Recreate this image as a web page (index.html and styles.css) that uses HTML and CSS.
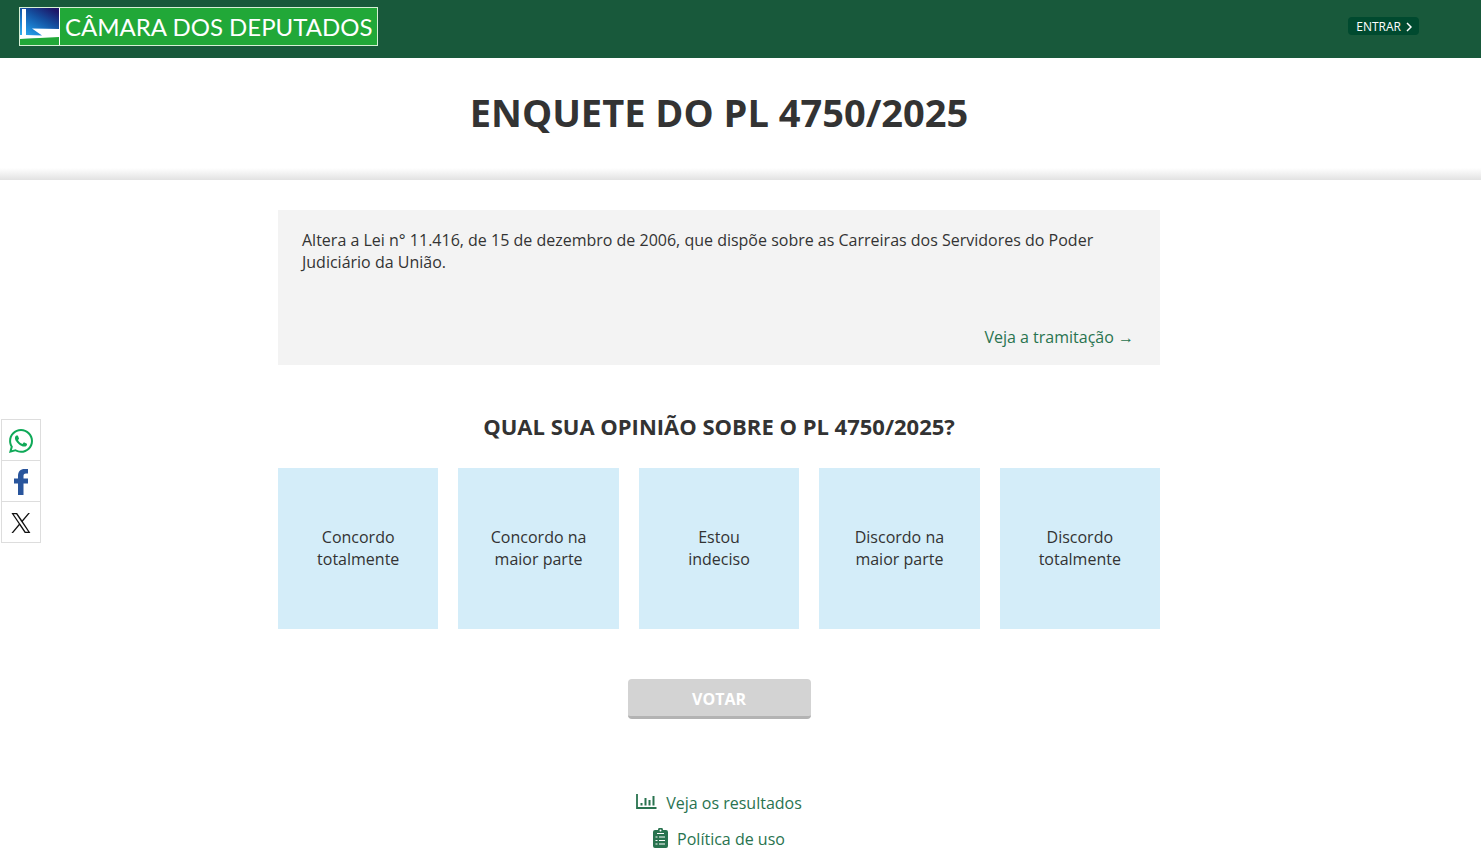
FILE: index.html
```html
<!DOCTYPE html>
<html lang="pt-BR">
<head>
  <meta charset="UTF-8">
  <meta name="viewport" content="width=device-width, initial-scale=1.0">
  <title>Enquete do PL 4750/2025</title>
  <link rel="stylesheet" href="styles.css">
</head>
<body>
  <header class="topbar">
    <a class="logo" href="#">
      <svg class="logo-mark" viewBox="0 0 39 37" aria-hidden="true">
        <defs>
          <linearGradient id="sky" x1="0.1" y1="1" x2="0.8" y2="0">
            <stop offset="0" stop-color="#35b5f0"/>
            <stop offset="0.3" stop-color="#1c86d6"/>
            <stop offset="0.65" stop-color="#1450a0"/>
            <stop offset="1" stop-color="#1d1668"/>
          </linearGradient>
        </defs>
        <rect width="39" height="31" fill="url(#sky)"/>
        <path d="M2 1h4v26l16 0.500L12 20.500l27 0.500v9L0 31v-4h2z" fill="#fff"/>
        <path d="M0 31l39-2v8H0z" fill="#21a838"/>
      </svg>
      <span class="logo-text">CÂMARA DOS DEPUTADOS</span>
    </a>
    <a class="login" href="#">ENTRAR
      <svg width="6" height="10" viewBox="0 0 6 10" aria-hidden="true"><path d="M1 1l4 4-4 4" fill="none" stroke="#fff" stroke-width="1.5"/></svg>
    </a>
  </header>

  <div class="title-bar">
    <h1>ENQUETE DO PL 4750/2025</h1>
  </div>

  <main class="content">
    <section class="summary">
      <p>Altera a Lei n° 11.416, de 15 de dezembro de 2006, que dispõe sobre as Carreiras dos Servidores do Poder Judiciário da União.</p>
      <a href="#">Veja a tramitação →</a>
    </section>

    <form class="poll">
      <h2 id="question">QUAL SUA OPINIÃO SOBRE O PL 4750/2025?</h2>
      <div class="options" role="radiogroup" aria-labelledby="question">
        <label class="option"><input type="radio" name="opinion" value="5"><span>Concordo totalmente</span></label>
        <label class="option"><input type="radio" name="opinion" value="4"><span>Concordo na maior parte</span></label>
        <label class="option"><input type="radio" name="opinion" value="3"><span>Estou<br>indeciso</span></label>
        <label class="option"><input type="radio" name="opinion" value="2"><span>Discordo na maior parte</span></label>
        <label class="option"><input type="radio" name="opinion" value="1"><span>Discordo totalmente</span></label>
      </div>
      <button type="submit" class="vote" disabled>VOTAR</button>
    </form>

    <nav class="links">
      <a href="#">
        <svg width="21" height="18" viewBox="0 0 21 18" aria-hidden="true"><path d="M1 0v14h19.500" fill="none" stroke="currentColor" stroke-width="1.800"/><path d="M5.500 11.500V9M9.500 11.500V4M13.500 11.500V6M17.500 11.500V2" fill="none" stroke="currentColor" stroke-width="2"/></svg>
        Veja os resultados
      </a>
      <a href="#">
        <svg width="15" height="22" viewBox="0 0 15 22" aria-hidden="true">
          <path d="M2 2h3a2.500 2.500 0 0 1 5 0h3a2 2 0 0 1 2 2v14a2 2 0 0 1-2 2H2a2 2 0 0 1-2-2V4a2 2 0 0 1 2-2z" fill="currentColor"/>
          <circle cx="7.500" cy="2.500" r="1" fill="#fff"/>
          <path d="M4 5.500h7M2.500 9h2M6 9h6M2.500 12.500h2M6 12.500h6M2.500 16h2M6 16h6" stroke="#fff" stroke-width="1.200"/>
        </svg>
        Política de uso
      </a>
    </nav>
  </main>

  <aside class="share">
    <a href="#" aria-label="WhatsApp">
      <svg width="24" height="24" viewBox="0 0 448 448" aria-hidden="true"><path fill="#0fa958" d="M380.900 65.100C339 23.100 283.200 0 223.900 0 101.500 0 1.900 99.600 1.900 222c0 39.100 10.200 77.300 29.600 111L0 448l117.700-30.900c32.400 17.700 68.900 27 106.100 27h.1c122.300 0 224.100-99.600 224.100-222 0-59.300-25.200-115-67.100-157zm-157 341.600c-33.200 0-65.700-8.900-94-25.700l-6.700-4-69.800 18.300L72 327.200l-4.400-7c-18.500-29.400-28.200-63.300-28.200-98.200 0-101.700 82.800-184.500 184.600-184.500 49.300 0 95.600 19.200 130.400 54.100 34.800 34.900 56.200 81.200 56.100 130.500 0 101.800-84.900 184.600-186.600 184.600zm101.200-138.200c-5.500-2.800-32.800-16.200-37.900-18-5.100-1.900-8.800-2.800-12.500 2.800-3.700 5.600-14.300 18-17.600 21.800-3.200 3.700-6.500 4.200-12 1.400-32.600-16.300-54-29.100-75.500-66-5.700-9.800 5.700-9.100 16.300-30.300 1.800-3.700.9-6.900-.5-9.700-1.400-2.800-12.500-30.100-17.100-41.200-4.500-10.800-9.100-9.300-12.500-9.500-3.200-.2-6.900-.2-10.600-.2-3.700 0-9.700 1.400-14.800 6.900-5.100 5.600-19.400 19-19.400 46.300 0 27.300 19.900 53.700 22.600 57.400 2.800 3.700 39.100 59.700 94.800 83.800 35.200 15.200 49 16.500 66.600 13.900 10.700-1.600 32.800-13.400 37.400-26.400 4.600-13 4.600-24.100 3.200-26.400-1.300-2.500-5-3.900-10.500-6.600z"/></svg>
    </a>
    <a href="#" aria-label="Facebook">
      <svg width="16" height="26" viewBox="0 0 16 26" aria-hidden="true"><path fill="#29559c" d="M5 26V14.500H1V9.500h4V7c0-4.500 2.500-7 6.500-7H15v4.500h-2C11 4.500 10.500 5.500 10.500 7v2.500H15v5h-4.500V26z"/></svg>
    </a>
    <a href="#" aria-label="X">
      <svg width="20" height="20" viewBox="0 0 24 24" aria-hidden="true"><path fill="#111" d="M14.200 10.200L22.700 0h-2l-7.400 8.800L7.300 0H.5l8.900 13.300L.5 24h2l7.800-9.300 6.200 9.300h6.800zm-2.700 3.300l-.9-1.300L3.200 1.600h3.100l5.800 8.500.9 1.300 7.600 11.100h-3.100z"/></svg>
    </a>
  </aside>
</body>
</html>
```
FILE: styles.css
```css
* {
  box-sizing: border-box;
}
body {
  margin: 0;
  background: #fff;
  color: #333;
  font-family: "Open Sans", sans-serif;
  font-size: 16px;
  line-height: 22px;
}
a {
  color: #29734f;
  text-decoration: none;
}
h1, h2, p {
  margin: 0;
}

/* top bar */
.topbar {
  display: flex;
  justify-content: space-between;
  align-items: flex-start;
  height: 58px;
  padding: 7px 62px 0 19px;
  background: #18593b;
}
.logo {
  display: flex;
  height: 39px;
  border: 1px solid #d5f0d5;
  background: #21a838;
  color: #fff;
}
.logo-mark {
  width: 40px;
  height: 37px;
  border-right: 1px solid #fff;
}
.logo-text {
  padding: 0 5px;
  font-family: Lato, sans-serif;
  font-size: 24px;
  line-height: 38px;
}
.login {
  display: flex;
  align-items: center;
  gap: 5px;
  height: 18px;
  margin-top: 10px;
  padding: 1px 7px 0 8px;
  border-radius: 4px;
  background: #004a2f;
  color: #fff;
  font-size: 12px;
}

/* title */
.title-bar {
  padding: 27px 43px 41px 0;
  background: linear-gradient(to top, #e2e2e2, #fff 12px);
  text-align: center;
}
h1 {
  font-size: 38px;
  line-height: 54px;
}

/* content */
.content {
  padding: 30px 43px 16px 0;
}
.summary,
.poll {
  max-width: 882px;
  margin: 0 auto;
}
.summary {
  display: flex;
  flex-direction: column;
  justify-content: space-between;
  min-height: 155px;
  padding: 19px 26px 17px 24px;
  background: #f3f3f3;
}
.summary a {
  align-self: flex-end;
}
.poll {
  padding-top: 46px;
  text-align: center;
}
h2 {
  margin-bottom: 27px;
  font-size: 22px;
  line-height: 30px;
}
.options {
  display: grid;
  grid-template-columns: repeat(5, 1fr);
  gap: 20px;
}
.option {
  display: flex;
  align-items: center;
  justify-content: center;
  min-height: 161px;
  padding: 0 30px 2px;
  background: #d4edf9;
  cursor: pointer;
}
.option input {
  position: absolute;
  opacity: 0;
}
.option:hover,
.option:focus-within {
  background: #bfe2f5;
}
.vote {
  width: 183px;
  height: 40px;
  margin-top: 50px;
  padding: 2px 0 0;
  border: 0;
  border-bottom: 3px solid #b3b3b3;
  border-radius: 4px;
  background: #d3d3d3;
  color: #fff;
  font-family: inherit;
  font-size: 16px;
  font-weight: bold;
}
.links {
  display: flex;
  flex-direction: column;
  align-items: center;
  gap: 14px;
  margin-top: 73px;
}
.links a {
  display: flex;
  align-items: center;
  gap: 9px;
}

/* share buttons */
.share {
  position: fixed;
  top: 419px;
  left: 1px;
  width: 40px;
  border: 1px solid #ddd;
  border-top: 0;
  background: #fff;
}
.share a {
  display: flex;
  align-items: center;
  justify-content: center;
  height: 41px;
  padding-top: 2px;
  border-top: 1px solid #ddd;
}
```
